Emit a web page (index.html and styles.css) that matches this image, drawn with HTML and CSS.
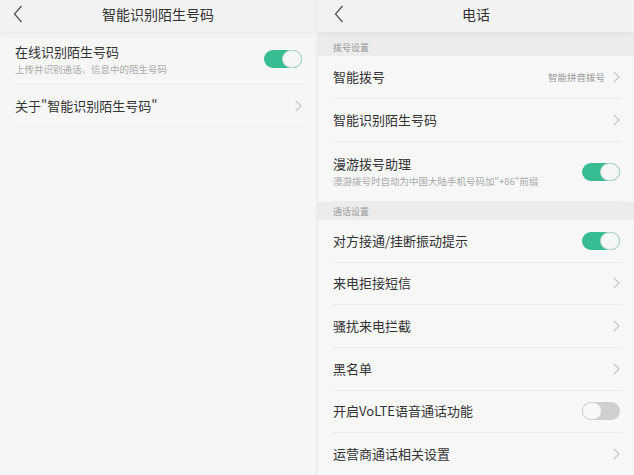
FILE: index.html
```html
<!DOCTYPE html>
<html lang="zh-CN">
<head>
<meta charset="utf-8">
<title>设置</title>
<link rel="stylesheet" href="styles.css">
</head>
<body>
<div class="screens">
  <section class="panel panel-left">
    <header class="bar">
      <svg class="back" viewBox="0 0 10 18" width="10" height="18"><path d="M8.5 1 L1.5 9 L8.5 17" fill="none" stroke="#555" stroke-width="1.3"/></svg>
      <h1 class="title">智能识别陌生号码</h1>
    </header>
    <div class="list">
      <div class="row row-tall">
        <div class="texts">
          <div class="label">在线识别陌生号码</div>
          <div class="sub">上传并识别通话、信息中的陌生号码</div>
        </div>
        <span class="toggle on"><span class="knob"></span></span>
      </div>
      <div class="row row-last">
        <div class="label">关于"智能识别陌生号码"</div>
        <svg class="chev" viewBox="0 0 7 12" width="7" height="12"><path d="M1 1 L6 6 L1 11" fill="none" stroke="#c4c4c4" stroke-width="1.1"/></svg>
      </div>
    </div>
  </section>
  <section class="panel panel-right">
    <header class="bar">
      <svg class="back" viewBox="0 0 10 18" width="10" height="18"><path d="M8.5 1 L1.5 9 L8.5 17" fill="none" stroke="#555" stroke-width="1.3"/></svg>
      <h1 class="title">电话</h1>
    </header>
    <div class="group group-first">拨号设置</div>
    <div class="list">
      <div class="row">
        <div class="label">智能拨号</div>
        <div class="end"><span class="value">智能拼音拨号</span><svg class="chev" viewBox="0 0 7 12" width="7" height="12"><path d="M1 1 L6 6 L1 11" fill="none" stroke="#c4c4c4" stroke-width="1.1"/></svg></div>
      </div>
      <div class="row">
        <div class="label">智能识别陌生号码</div>
        <svg class="chev" viewBox="0 0 7 12" width="7" height="12"><path d="M1 1 L6 6 L1 11" fill="none" stroke="#c4c4c4" stroke-width="1.1"/></svg>
      </div>
      <div class="row row-roam">
        <div class="texts">
          <div class="label">漫游拨号助理</div>
          <div class="sub">漫游拨号时自动为中国大陆手机号码加"+86"前缀</div>
        </div>
        <span class="toggle on"><span class="knob"></span></span>
      </div>
    </div>
    <div class="group">通话设置</div>
    <div class="list">
      <div class="row row-eq">
        <div class="label">对方接通/挂断振动提示</div>
        <span class="toggle on"><span class="knob"></span></span>
      </div>
      <div class="row row-eq">
        <div class="label">来电拒接短信</div>
        <svg class="chev" viewBox="0 0 7 12" width="7" height="12"><path d="M1 1 L6 6 L1 11" fill="none" stroke="#c4c4c4" stroke-width="1.1"/></svg>
      </div>
      <div class="row row-eq">
        <div class="label">骚扰来电拦截</div>
        <svg class="chev" viewBox="0 0 7 12" width="7" height="12"><path d="M1 1 L6 6 L1 11" fill="none" stroke="#c4c4c4" stroke-width="1.1"/></svg>
      </div>
      <div class="row row-eq">
        <div class="label">黑名单</div>
        <svg class="chev" viewBox="0 0 7 12" width="7" height="12"><path d="M1 1 L6 6 L1 11" fill="none" stroke="#c4c4c4" stroke-width="1.1"/></svg>
      </div>
      <div class="row row-eq">
        <div class="label">开启VoLTE语音通话功能</div>
        <span class="toggle off"><span class="knob"></span></span>
      </div>
      <div class="row row-eq">
        <div class="label">运营商通话相关设置</div>
        <svg class="chev" viewBox="0 0 7 12" width="7" height="12"><path d="M1 1 L6 6 L1 11" fill="none" stroke="#c4c4c4" stroke-width="1.1"/></svg>
      </div>
    </div>
  </section>
</div>
</body>
</html>
```
FILE: styles.css
```css
* { box-sizing: border-box; margin: 0; padding: 0; }
html, body { width: 634px; height: 475px; overflow: hidden; }
body {
  font-family: "Noto Sans CJK SC", "Noto Sans", sans-serif;
  background: #ededed;
  color: #333;
}
.screens {
  display: grid;
  grid-template-columns: 316px 316px;
  column-gap: 2px;
  height: 475px;
}
.panel {
  background: #f6f6f6;
  display: flex;
  flex-direction: column;
  overflow: hidden;
}
.panel-right { background: #f7f7f8; }
.bar {
  height: 32px;
  flex: none;
  position: relative;
  display: flex;
  align-items: flex-start;
  justify-content: center;
  padding-top: 6px;
  background: #f2f2f2;
  box-shadow: 0 2px 5px rgba(0,0,0,0.05);
  z-index: 1;
}
.back { position: absolute; left: 13px; top: 5px; }
.panel-right .back { left: 16px; }
.title {
  font-size: 14px;
  font-weight: 400;
  color: #333;
  line-height: 16px;
}
.group {
  flex: none;
  height: 18px;
  background: #ececec;
  font-size: 9px;
  color: #9a9a9a;
  padding-left: 15px;
  display: flex;
  align-items: center;
}
.group-first { height: 24px; padding-top: 6px; }
.list { display: flex; flex-direction: column; }
.row {
  height: 43px;
  display: flex;
  align-items: center;
  justify-content: space-between;
  margin-left: 15px;
  margin-right: 12px;
  padding-right: 2px;
  border-bottom: 1px solid #ebebeb;
}
.panel-left .row-tall { height: 53px; padding-top: 2px; }
.row-last { border-bottom-color: #f0f0f0; }
.row-roam { height: 60px; }
.row-eq { height: 42.67px; }
.label { font-size: 13px; color: #333; line-height: 18px; }
.sub { font-size: 9.5px; color: #aaa; line-height: 14px; margin-top: 1px; white-space: nowrap; }
.end { display: flex; align-items: center; gap: 8px; }
.value { font-size: 9.5px; color: #999; }
.chev { flex: none; }
.toggle {
  flex: none;
  width: 38px;
  height: 18px;
  border-radius: 9px;
  position: relative;
  display: block;
}
.toggle.on { background: #38bc93; }
.toggle.off { background: #cfcfcf; }
.knob {
  position: absolute;
  top: 0;
  width: 20px;
  height: 18px;
  border-radius: 9px;
  background: #f4f7f6;
  border: 1px solid #bcd6ce;
}
.toggle.on .knob { right: 0; }
.toggle.off .knob { left: 0; border-color: #d2d2d2; background: #f8f8f8; }
```
